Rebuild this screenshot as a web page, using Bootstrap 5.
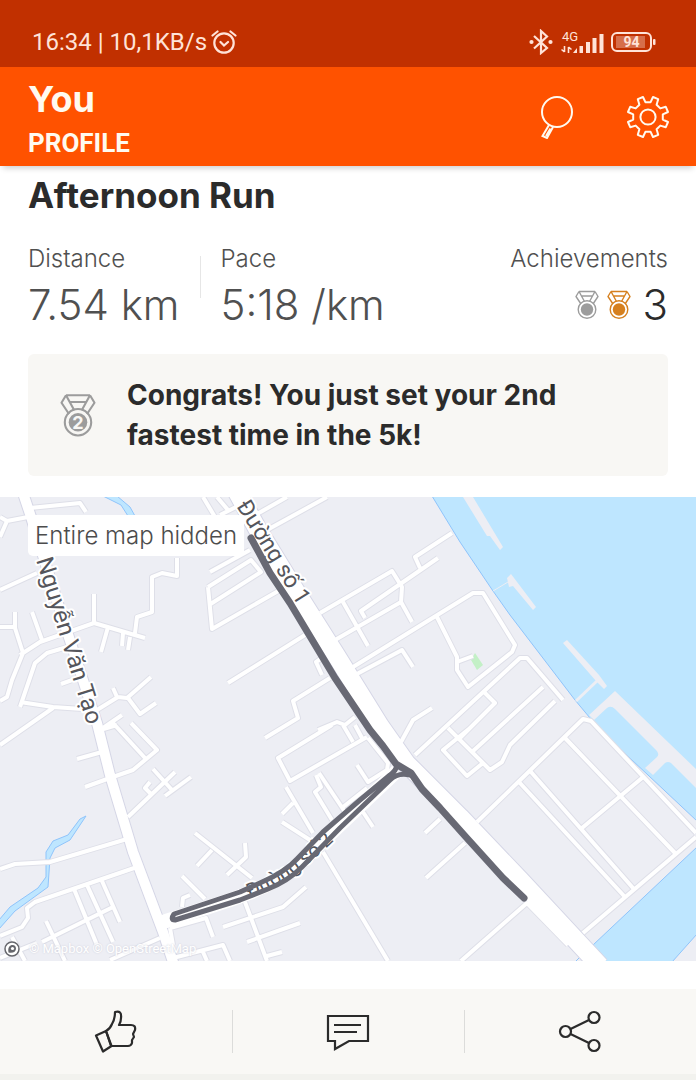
<!DOCTYPE html>
<html lang="en">
<head>
    <meta charset="UTF-8">
    <meta name="viewport" content="width=device-width, initial-scale=1.0">
    <title>You - Profile</title>
    <link href="https://cdn.jsdelivr.net/npm/bootstrap@5.3.0/dist/css/bootstrap.min.css" rel="stylesheet">
    <style>
        body {
            font-family: Inter, "Liberation Sans", sans-serif;
            background-color: #fff;
            color: #2b2b2b;
        }
        svg {
            display: block;
        }
        .status-bar {
            background-color: #c13000;
            color: #ffe3d8;
            font-family: Roboto, "Liberation Sans", sans-serif;
            font-size: 24px;
            line-height: 28px;
            padding: 28px 40px 11px 32px;
        }
        .app-header {
            background-color: #ff5200;
            color: #fffaf0;
            padding: 11px 26px 4px 28px;
            box-shadow: 0 5px 6px -3px rgba(0, 0, 0, 0.2);
        }
        .app-header h1 {
            font-size: 36px;
            line-height: 42px;
            font-weight: 700;
        }
        .app-header h2 {
            font-family: Roboto, "Liberation Sans", sans-serif;
            font-size: 26px;
            line-height: 38px;
            font-weight: 700;
        }
        .icon-btn {
            border: 0;
            background: none;
            padding: 0;
            color: inherit;
        }
        .header-icons {
            gap: 51px;
            padding-bottom: 6px;
        }
        .activity {
            padding: 7px 28px 21px;
        }
        .activity-title {
            font-size: 35px;
            line-height: 44px;
            font-weight: 700;
        }
        .stats {
            margin-top: 26px;
            color: #505050;
        }
        .stat-label {
            font-size: 24px;
            line-height: 32px;
            font-weight: 300;
        }
        .stat-value {
            font-size: 42px;
            line-height: 60px;
            font-weight: 300;
        }
        .stat-line {
            width: 1px;
            height: 42px;
            margin: 13px 20px 0 20px;
            background-color: #e6e6e6;
        }
        .dark-text {
            color: #2b2b2b;
        }
        .congrats {
            background-color: #f8f7f4;
            border-radius: 6px;
            margin-top: 19px;
            padding: 21px 32px;
            gap: 31px;
            font-size: 28px;
            line-height: 40px;
            font-weight: 700;
        }
        .map-box {
            background-color: #edeef4;
        }
        .map-box > svg {
            width: 100%;
            height: auto;
        }
        .map-badge {
            position: absolute;
            top: 18px;
            left: 28px;
            background-color: #fff;
            border-radius: 5px;
            color: #4c4c4c;
            font-size: 24px;
            line-height: 41px;
            font-weight: 300;
            padding: 0 7px;
        }
        .map-credit {
            position: absolute;
            left: 4px;
            bottom: 4px;
            gap: 9px;
            font-family: Roboto, sans-serif;
            font-size: 13px;
            line-height: 17px;
        }
        .map-credit a {
            color: #fff;
            text-shadow: 0 0 2px #c9cad6;
            text-decoration: none;
        }
        .road-name {
            font-family: Roboto, "Noto Sans", sans-serif;
            fill: #55565c;
            stroke: #fff;
            stroke-width: 4px;
            stroke-linejoin: round;
            paint-order: stroke;
        }
        .actions {
            margin-top: 28px;
            padding: 21px 0;
            background-color: #f9f8f5;
            border-bottom: 6px solid #f2f2ee;
        }
        .actions .icon-btn {
            height: 43px;
        }
        .actions .icon-btn + .icon-btn {
            border-left: 1px solid #dcdcda;
        }
    </style>
</head>
<body>
    <svg width="0" height="0" class="position-absolute" aria-hidden="true">
        <symbol id="medal" viewBox="0 0 24 30">
            <g fill="none" stroke="currentColor" stroke-width="1.4" stroke-linejoin="round">
                <path d="M4 1.5H20M4 1.5L1 6.500L6 14M4 1.500L9.500 11.500M20 1.500L23 6.500L18 14M20 1.500L14.500 11.500M6.200 6H17.800"/>
                <circle cx="12" cy="19.500" r="8.800"/>
            </g>
            <circle cx="12" cy="19.500" r="6.200" fill="currentColor"/>
        </symbol>
    </svg>

    <div class="status-bar d-flex justify-content-between align-items-center">
        <div class="d-flex align-items-center gap-1">
            <span>16:34 | 10,1KB/s</span>
            <svg width="26" height="26" viewBox="0 0 26 26" fill="none" stroke="currentColor" stroke-width="2.200" stroke-linecap="round" aria-hidden="true">
                <circle cx="13" cy="14" r="9.700"/>
                <path d="M9.500 13L13 16.500L17 13M1.500 6.500L6.500 2.500M24.500 6.500L19.500 2.500"/>
            </svg>
        </div>
        <div class="d-flex align-items-center">
            <svg width="24" height="26" viewBox="0 0 24 26" fill="none" stroke="currentColor" stroke-width="2.200" aria-hidden="true">
                <path d="M5 7L18 19L12 24V2L18 7.500L5 19.500"/>
                <circle cx="2.500" cy="13" r="1" fill="currentColor"/>
                <circle cx="21.500" cy="13" r="1" fill="currentColor"/>
            </svg>
            <svg class="ms-2" width="45" height="26" viewBox="0 0 45 26" fill="currentColor" aria-hidden="true">
                <text x="1" y="12" font-size="13">4G</text>
                <path d="M12 24L16 19V24ZM18.500 17H22V24H18.500ZM25 13H29V24H25ZM31.500 9H35.500V24H31.500ZM38.500 5H42.500V24H38.500Z"/>
                <path d="M3.500 17V23M0.500 20.500L3.500 23M7.500 24V18M10.500 20.500L7.500 18" fill="none" stroke="currentColor" stroke-width="1.600"/>
            </svg>
            <svg class="ms-1" width="46" height="26" viewBox="0 0 46 26" aria-hidden="true">
                <rect x="2" y="4" width="39" height="18" rx="5" fill="none" stroke="currentColor" stroke-width="2"/>
                <rect x="6" y="7" width="29" height="12" fill="currentColor" opacity="0.350"/>
                <rect x="43" y="10" width="2.500" height="6" rx="1" fill="currentColor"/>
                <text x="21.500" y="18" font-size="14" font-weight="700" text-anchor="middle" fill="currentColor">94</text>
            </svg>
        </div>
    </div>

    <header class="app-header d-flex justify-content-between align-items-center position-relative">
        <div>
            <h1 class="mb-1">You</h1>
            <h2 class="mb-0">PROFILE</h2>
        </div>
        <div class="header-icons d-flex align-items-center">
            <button type="button" class="icon-btn" aria-label="Search">
                <svg width="36" height="44" viewBox="0 0 36 44" fill="none" stroke="currentColor" stroke-width="2">
                    <circle cx="18" cy="17" r="15"/>
                    <path d="M10 30L3.500 41L8 43L14 32M11.500 33.500L7 41"/>
                </svg>
            </button>
            <button type="button" class="icon-btn" aria-label="Settings">
                <svg width="44" height="44" viewBox="-22 -22 44 44" fill="none" stroke="currentColor" stroke-width="2" stroke-linejoin="round">
                    <path d="M14.800 2.600L20 5L17.800 10.200L12.300 8.600L8.600 12.300L10.200 17.800L5 20L2.600 14.800H-2.600L-5 20L-10.200 17.800L-8.600 12.300L-12.300 8.600L-17.800 10.200L-20 5L-14.800 2.600V-2.600L-20 -5L-17.800 -10.200L-12.300 -8.600L-8.600 -12.300L-10.200 -17.800L-5 -20L-2.600 -14.800H2.600L5 -20L10.200 -17.800L8.600 -12.300L12.300 -8.600L17.800 -10.200L20 -5L14.800 -2.600Z"/>
                    <circle r="7.600"/>
                </svg>
            </button>
        </div>
    </header>

    <main>
        <section class="activity">
            <h3 class="activity-title mb-0">Afternoon Run</h3>
            <div class="stats d-flex">
                <div>
                    <div class="stat-label">Distance</div>
                    <div class="stat-value">7.54 km</div>
                </div>
                <div class="stat-line"></div>
                <div>
                    <div class="stat-label">Pace</div>
                    <div class="stat-value">5:18 /km</div>
                </div>
                <div class="ms-auto">
                    <div class="stat-label">Achievements</div>
                    <div class="d-flex justify-content-end align-items-center gap-2">
                        <svg width="24" height="30" color="#9c9c9c" aria-hidden="true"><use href="#medal"/></svg>
                        <svg width="24" height="30" color="#d6801f" aria-hidden="true"><use href="#medal"/></svg>
                        <span class="stat-value dark-text ms-1">3</span>
                    </div>
                </div>
            </div>
            <div class="congrats d-flex align-items-center">
                <svg class="flex-shrink-0" width="36" height="45" viewBox="0 0 36 45" color="#9c9c9c" aria-hidden="true">
                    <use href="#medal"/>
                    <text x="18" y="36" font-size="18" font-weight="700" text-anchor="middle" fill="#f8f7f4">2</text>
                </svg>
                <div>Congrats! You just set your 2nd fastest time in the 5k!</div>
            </div>
        </section>

        <section class="map-box position-relative">
            <svg viewBox="0 497 696 464" role="img" aria-label="Route map">
                <defs>
                    <path id="nameVanTao" d="M36 560L87 724"/>
                    <path id="nameSo1" d="M236 506L266 554L297 604"/>
                    <path id="nameSo2" d="M250 898Q296 880 345 830"/>
                    <!-- minor streets, drawn twice: casing and fill -->
                    <g id="streets" fill="none" stroke-linejoin="round">
                        <path d="M30 508L80 503L86 512M0 517L7 521L28 517M7 521L0 537M0 590L37 573M177 558V576L162 573L152 577V612L137 617L135 633M94 594V623M20 655L40 642L94 623L145 638M15 612V628L23 653L12 680L7 697L0 701M0 627H15M32 612L42 640M108 627L101 652M123 633L122 646M130 637L128 650M20 707L35 663L47 653L67 647M61 684L75 679M20 702L53 707L97 710L118 697L127 698L151 677M113 688L117 697M128 698L140 714L156 703M53 708L0 745M103 728L122 715M113 723L145 758M131 723L157 750L133 770L110 778L85 787M100 730L117 725M77 759L102 752"/>
                        <path d="M128 817L175 772M152 795L145 788L150 782M153 769L172 790M165 796L191 777M0 869L15 864L50 862L127 839M0 936L22 927L28 918L27 908L35 902L137 867M74 889L97 945M87 885L113 942M102 881L120 922M0 958L37 943M42 942L113 907M46 921L65 961M12 937L25 961M110 960L160 938M195 833L252 878M212 850L197 866M227 875L246 857L245 843M182 876L205 899M182 907L183 898L190 895M170 928L206 918L213 937M223 927L283 907L306 887M170 928L173 945M173 958L223 945L230 961M203 952L207 961M245 902L267 961M247 942L300 923M267 956L282 952M323 852L388 961"/>
                        <path d="M286 787L313 833M282 814L293 803M282 822L310 840M316 775L321 787L315 792L332 820M319 773L345 812M343 807L367 788M363 812L373 827M332 725L278 758L290 781L367 737M265 738L298 718L293 701L330 678M343 725L353 742M355 725L362 738M357 765L368 782L387 770L388 763L368 738M318 730L337 722L345 725L355 717M322 658L316 662L322 675M228 683L305 635M425 833L440 819M426 878L465 843M250 518L287 497M267 530L327 497M203 497L215 517M217 497L228 510M220 515L236 507M210 572L250 550M208 587L251 560L261 572L209 605M208 587L212 629L280 590"/>
                        <path d="M320 613L392 571L402 587L401 602L412 622M343 602L368 646M365 618L361 611L438 558M420 568L415 557L452 533M335 640L401 602M353 667L473 593H483L515 645L512 652L468 687L457 670V657L437 617M457 662L473 656M355 675L402 650L413 667M432 708L413 720L401 742M415 755L520 658H527L563 700M448 728L490 770L502 762L510 745L555 701M485 693L495 703L460 738M472 752L543 687M470 728L443 750L467 776L483 763"/>
                        <path d="M477 822L583 719L591 721L696 833M696 837L583 933M565 738L675 853M642 778L582 828M531 772L633 888M519 782L625 897M461 961L527 903L568 945"/>
                    </g>
                </defs>
                <rect y="497" width="696" height="464" fill="#edeef4"/>
                <!-- river and canals -->
                <g fill="#bee6ff" stroke="#8fc4fb" stroke-width="1">
                    <path d="M432 496L460 542L493 591L510 615L575 700L600 730L697 821V496Z"/>
                    <path d="M697 847L593 945L606 962H672L697 934M575 962L579 958"/>
                    <path d="M103 496L121 505L128 516H135L130 507L117 496Z"/>
                    <path d="M86 816L80 819L68 835L53 841L46 852V877L38 888L10 907L-1 920V929L15 911L48 887L50 858L55 848L70 840Z"/>
                </g>
                <!-- piers -->
                <g fill="#edeef4">
                    <path d="M463 497H473L503 547L500 550L490 536H487ZM511 574L536 607L533 610L513 586L509 587L507 578ZM567 640L599 675L607 686L604 689L596 681L563 643Z"/>
                    <path d="M615 691L696 769V788L671 763Q668 761 665 763L653 775L645 768L657 757Q660 754 656 750L615 709Q611 705 607 708L594 720L589 715Z"/>
                    <path d="M493 591L508 582" stroke="#edeef4" stroke-width="1"/>
                    <path d="M576 701L598 680" stroke="#edeef4" stroke-width="3"/>
                </g>
                <path d="M475 653L483 665L477 670L471 660Z" fill="#c3f0c6"/>
                <use href="#streets" stroke="#dedfe8" stroke-width="6"/>
                <g fill="none" stroke="#d5d6e6" stroke-linejoin="round">
                    <path d="M22 490L31 517L60 610L97 723L110 775L133 852L163 932L174 965" stroke-width="12"/>
                    <path d="M236 490L258 530L293 587L336 655L380 726L406 763L460 817L520 880L600 966" stroke-width="20"/>
                </g>
                <use href="#streets" stroke="#fff" stroke-width="4"/>
                <g fill="none" stroke="#fff" stroke-linejoin="round">
                    <path d="M22 490L31 517L60 610L97 723L110 775L133 852L163 932L174 965" stroke-width="10"/>
                    <path d="M236 490L258 530L293 587L336 655L380 726L406 763L460 817L520 880L600 966" stroke-width="18"/>
                    <path d="M163 922L230 900Q275 885 300 863L397 771" stroke-width="14"/>
                </g>
                <g class="road-name">
                    <text font-size="24"><textPath href="#nameVanTao">Nguyễn Văn Tạo</textPath></text>
                    <text font-size="23"><textPath href="#nameSo1">Đường số 1</textPath></text>
                    <text font-size="20"><textPath href="#nameSo2">Đường số 2</textPath></text>
                </g>
                <!-- recorded run -->
                <g fill="none" stroke="#686974" stroke-linejoin="round" stroke-linecap="round">
                    <path d="M251 538L270 573L290 603L335 678L370 730L383 746L396 764L411 773L422 789L440 808L465 836L503 878L524 898" stroke-width="7"/>
                    <path d="M397 765Q396 771 390 775L360 800L323 832L297 859Q285 872 262 882L240 892L174 914Q170 920 175 920L240 900L268 889Q288 881 302 867L340 828L390 780Q398 772 410 775" stroke-width="5"/>
                </g>
            </svg>
            <span class="map-badge">Entire map hidden</span>
            <div class="map-credit d-flex align-items-center">
                <svg width="16" height="16" viewBox="0 0 16 16" aria-hidden="true">
                    <circle cx="8" cy="8" r="7" fill="#fff" stroke="#66676d" stroke-width="1.500"/>
                    <path d="M4.500 11.500C3.500 6 6 4 8.500 4A3.700 3.700 0 0 1 12 7.700C12 10.500 9 12.500 4.500 11.500Z" fill="#66676d"/>
                    <circle cx="8.500" cy="7.500" r="1.600" fill="#fff"/>
                </svg>
                <span><a href="#">© Mapbox</a> <a href="#">© OpenStreetMap</a></span>
            </div>
        </section>
    </main>

    <footer class="actions d-flex">
        <button type="button" class="icon-btn flex-fill w-100 d-flex justify-content-center" aria-label="Give kudos">
            <svg width="44" height="43" viewBox="0 0 44 43" fill="none" stroke="currentColor" stroke-width="2.200" stroke-linejoin="round">
                <path d="M12 21Q16 19 18 14Q21 9 21 2Q28 0 27 8Q27 12 25 15H37Q42 15 41 20L39 24L40 27L38 30V33Q37 36 34 36H17Z"/>
                <path d="M2 25.500L12 21L17.500 36L9 41.500Z"/>
            </svg>
        </button>
        <button type="button" class="icon-btn flex-fill w-100 d-flex justify-content-center" aria-label="Comments">
            <svg width="44" height="43" viewBox="0 0 44 43" fill="none" stroke="currentColor" stroke-width="2.200">
                <path d="M2 6H42V31H23L9 39V31H2ZM8 15H35M8 22H31"/>
            </svg>
        </button>
        <button type="button" class="icon-btn flex-fill w-100 d-flex justify-content-center" aria-label="Share">
            <svg width="44" height="43" viewBox="0 0 44 43" fill="none" stroke="currentColor" stroke-width="2.200">
                <circle cx="7.500" cy="21.500" r="5.500"/>
                <circle cx="36" cy="7.500" r="5.500"/>
                <circle cx="36" cy="35.500" r="5.500"/>
                <path d="M12.500 19L31 10M12.500 24L31 33"/>
            </svg>
        </button>
    </footer>

    <script src="https://cdn.jsdelivr.net/npm/bootstrap@5.3.0/dist/js/bootstrap.bundle.min.js"></script>
</body>
</html>
